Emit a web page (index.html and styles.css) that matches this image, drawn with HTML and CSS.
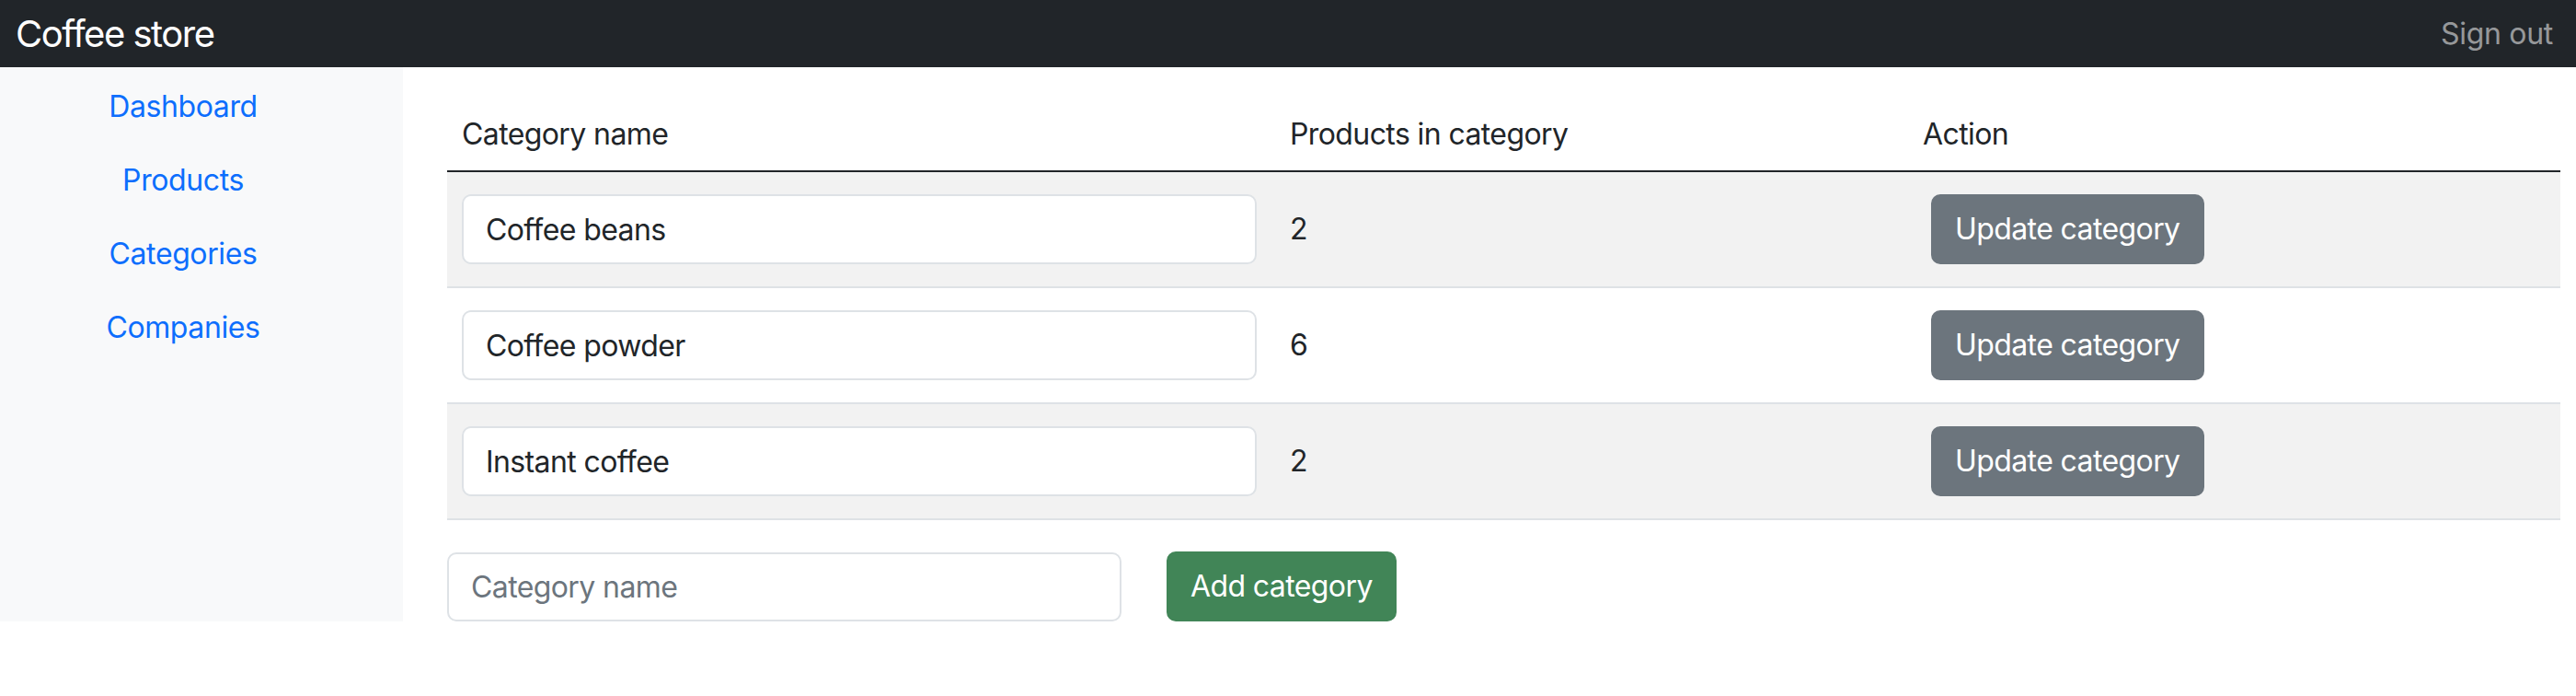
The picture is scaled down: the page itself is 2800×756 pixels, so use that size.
FILE: index.html
```html
<!DOCTYPE html>
<html lang="en">
<head>
<meta charset="utf-8">
<title>Coffee store</title>
<link rel="stylesheet" href="styles.css">
</head>
<body>
<header class="navbar">
  <a class="brand" href="#">Coffee store</a>
  <a class="signout" href="#">Sign out</a>
</header>
<div class="layout">
  <nav class="sidebar">
    <a class="nav-link" href="#">Dashboard</a>
    <a class="nav-link" href="#">Products</a>
    <a class="nav-link" href="#">Categories</a>
    <a class="nav-link" href="#">Companies</a>
  </nav>
  <main class="main">
    <table class="table">
      <thead>
        <tr>
          <th class="col-name">Category name</th>
          <th class="col-count">Products in category</th>
          <th class="col-action">Action</th>
        </tr>
      </thead>
      <tbody>
        <tr class="striped">
          <td class="cell-name"><input class="form-control" type="text" value="Coffee beans"></td>
          <td>2</td>
          <td class="cell-action"><button class="btn btn-secondary">Update category</button></td>
        </tr>
        <tr>
          <td class="cell-name"><input class="form-control" type="text" value="Coffee powder"></td>
          <td>6</td>
          <td class="cell-action"><button class="btn btn-secondary">Update category</button></td>
        </tr>
        <tr class="striped">
          <td class="cell-name"><input class="form-control" type="text" value="Instant coffee"></td>
          <td>2</td>
          <td class="cell-action"><button class="btn btn-secondary">Update category</button></td>
        </tr>
      </tbody>
    </table>
    <form class="add-form">
      <input class="form-control add-input" type="text" placeholder="Category name">
      <button class="btn btn-success" type="button">Add category</button>
    </form>
  </main>
</div>
</body>
</html>
```
FILE: styles.css
```css
* { box-sizing: border-box; }
html, body { margin: 0; padding: 0; }
body {
  font-family: Inter, "Noto Sans", "Liberation Sans", sans-serif;
  font-size: 32px;
  line-height: 48px;
  letter-spacing: -0.6px;
  color: #212529;
  background: #fff;
}
a { text-decoration: none; }

.navbar {
  height: 73px;
  background: #212529;
  display: flex;
  align-items: center;
  justify-content: space-between;
  padding: 0 25px 0 17px;
}
.brand {
  color: #fff;
  font-size: 40px;
  line-height: 60px;
  letter-spacing: -1.5px;
}
.signout {
  color: rgba(255, 255, 255, 0.55);
  font-size: 32px;
  letter-spacing: -0.3px;
}

.layout {
  display: flex;
  align-items: stretch;
}
.sidebar {
  width: 438px;
  flex: none;
  background: #f8f9fa;
  padding: 3px 40px 0 0;
  display: flex;
  flex-direction: column;
}
.nav-link {
  display: block;
  text-align: center;
  padding: 16px 32px;
  color: #0d6efd;
  font-size: 32px;
  line-height: 48px;
  letter-spacing: -0.4px;
}

.main {
  flex: 1;
  padding: 32px 17px 0 48px;
}
.table {
  width: 100%;
  border-collapse: collapse;
  table-layout: fixed;
}
.table th {
  text-align: left;
  font-weight: 400;
  padding: 17px 16px 15px;
  border-bottom: 2px solid #212529;
}
.col-name { width: 900px; }
.col-count { width: 688px; }
.table td {
  padding: 24px 16px;
  vertical-align: middle;
  border-bottom: 2px solid #dee2e6;
}
.table td.cell-name { padding-right: 20px; }
.table td.cell-action { padding-left: 25px; }
.striped td { background: #f2f2f2; }

.form-control {
  display: block;
  width: 100%;
  height: 76px;
  padding: 12px 24px;
  font-family: inherit;
  font-size: 32px;
  line-height: 48px;
  letter-spacing: -0.6px;
  color: #212529;
  background: #fff;
  border: 2px solid #dee2e6;
  border-radius: 10px;
  outline: none;
}
.form-control::placeholder { color: #6c757d; }

.btn {
  height: 76px;
  padding: 12px 24px;
  font-family: inherit;
  font-size: 32px;
  line-height: 48px;
  letter-spacing: -0.6px;
  color: #fff;
  border: 2px solid transparent;
  border-radius: 10px;
  cursor: pointer;
}
.btn-secondary { background: #6c757d; border-color: #6c757d; }
.btn-success { background: #418557; border-color: #418557; }

.add-form {
  display: flex;
  align-items: center;
  gap: 49px;
  margin-top: 34px;
}
.add-input {
  width: 733px;
  height: 75px;
}
```
